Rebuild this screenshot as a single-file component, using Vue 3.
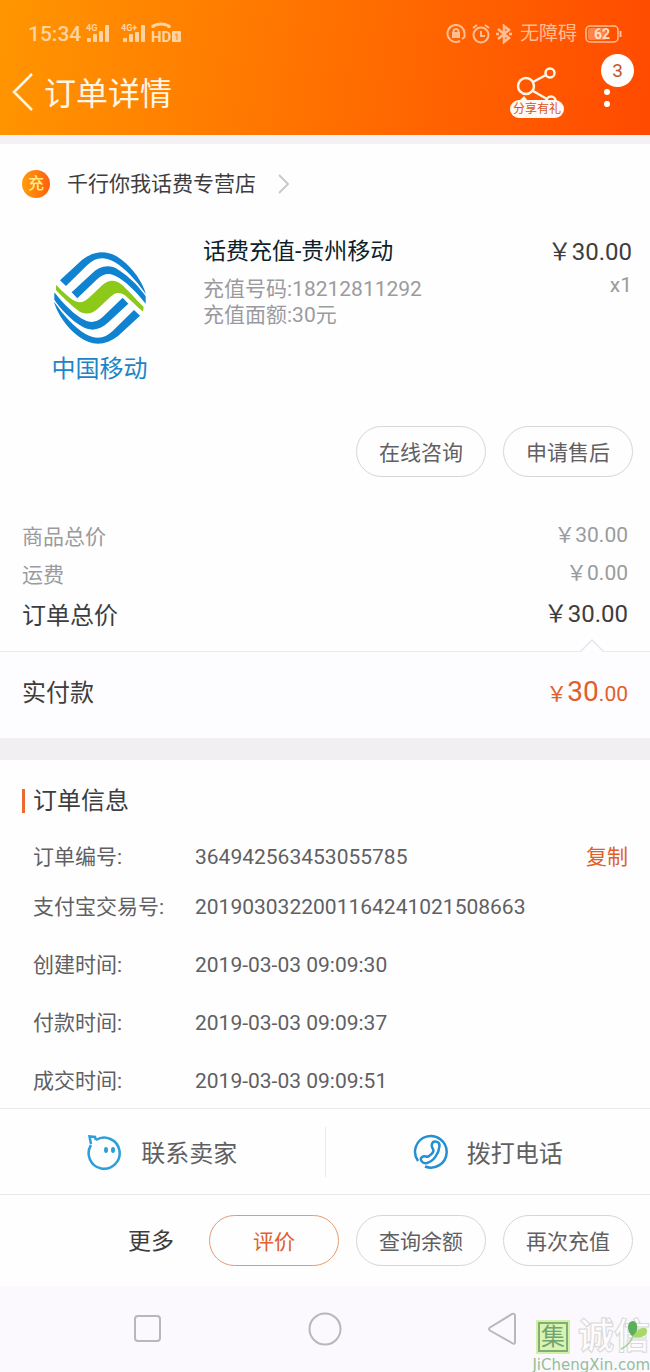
<template>
  <div class="page">
    <header class="header">
      <div class="status">
        <div class="status-left">
          <span class="clock">15:34</span>
          <svg class="signal" width="96" height="26" viewBox="0 -2 96 26">
            <text x="0" y="8" class="net">4G</text>
            <text x="35" y="8" class="net">4G+</text>
            <g fill="currentColor">
              <rect x="1" y="15" width="4" height="4" rx="1" />
              <rect x="7" y="11" width="4" height="8" rx="1" />
              <rect x="13" y="8" width="4" height="11" rx="1" />
              <rect x="19" y="2" width="4" height="17" rx="1" />
              <rect x="37" y="15" width="4" height="4" rx="1" />
              <rect x="43" y="11" width="4" height="8" rx="1" />
              <rect x="49" y="9" width="4" height="10" rx="1" />
              <rect x="55" y="2" width="4" height="17" rx="1" />
              <rect x="86" y="8" width="9" height="11" rx="1" />
            </g>
            <path d="M67 5 V3 Q75 -1 83 3 V5" fill="none" stroke="currentColor" stroke-width="3" />
            <text x="65" y="19" class="hd">HD</text>
            <path d="M89 12 l2 -1 v6" fill="none" stroke="#ff8300" stroke-width="1" />
          </svg>
        </div>
        <div class="status-right">
          <svg width="20" height="20" viewBox="0 0 20 20" fill="none" stroke="currentColor" stroke-width="2">
            <path d="M14 17 A8.5 8.5 0 1 1 18.5 10 M18.5 8 V13 L16 15" />
            <rect x="7" y="9" width="6" height="4" fill="currentColor" />
            <path d="M7.5 9 V7.5 a2.5 2.5 0 0 1 5 0 V9" />
          </svg>
          <svg width="20" height="20" viewBox="0 0 20 20" fill="none" stroke="currentColor" stroke-width="2">
            <circle cx="10" cy="11" r="7.5" />
            <path d="M10 7 V12 H14 M2 4 L6 1 M18 4 L14 1" />
          </svg>
          <svg width="16" height="20" viewBox="0 0 16 20" fill="none" stroke="currentColor" stroke-width="2.5">
            <path d="M2 5 L13 14 L8 18 V2 L13 6 L2 15" />
            <path d="M0 10 h3 M13 10 h3" />
          </svg>
          <span class="mode">无障碍</span>
          <svg width="37" height="18" viewBox="0 0 37 18">
            <rect x="1" y="1" width="32" height="16" rx="4" fill="none" stroke="currentColor" stroke-width="1.5" />
            <rect x="3" y="3" width="18" height="12" rx="2" fill="currentColor" opacity="0.45" />
            <path d="M35.5 6 V12" stroke="currentColor" stroke-width="2" />
            <text x="17" y="14" text-anchor="middle" class="battery">62</text>
          </svg>
        </div>
      </div>
      <div class="title-bar">
        <button class="back" aria-label="返回">
          <svg width="22" height="40" viewBox="0 0 22 40" fill="none" stroke="currentColor" stroke-width="2.5">
            <path d="M20 2 L2 20 L20 38" />
          </svg>
        </button>
        <h1>订单详情</h1>
        <button class="share" aria-label="分享有礼">
          <svg width="42" height="38" viewBox="0 0 42 38" fill="none" stroke="currentColor" stroke-width="2.5">
            <circle cx="10" cy="19" r="8" />
            <circle cx="34" cy="6" r="4.5" />
            <circle cx="35" cy="34" r="4.5" />
            <path d="M17 15 L30 8 M17 24 L31 32" />
            <path d="M3 34 L8 29 L12 34 Z" fill="currentColor" stroke="none" />
          </svg>
          <span class="share-tag">分享有礼</span>
        </button>
        <button class="menu" aria-label="菜单">
          <i></i><i></i>
          <span class="count">3</span>
        </button>
      </div>
    </header>

    <main>
      <section class="order">
        <a class="shop" href="#">
          <span class="shop-icon">充</span>
          <span>千行你我话费专营店</span>
          <svg width="12" height="20" viewBox="0 0 12 20" fill="none" stroke="#c9c9cc" stroke-width="2">
            <path d="M1 1 L10 10 L1 19" />
          </svg>
        </a>

        <div class="item">
          <div class="brand">
            <svg width="94" height="92" viewBox="39 35 282 276">
              <path class="green" d="M48 133 C70 156 90 174 105 182 C122 190 134 184 147 172 L185 136 C205 118 225 117 244 132 C265 150 290 180 311 200 L309 214 C290 198 270 178 255 165 C238 154 226 157 213 168 L175 204 C155 224 132 224 113 210 C90 192 65 167 48 150 Z" />
              <path class="blue" :d="outerBand" />
              <path class="blue" :d="innerBand" />
              <g transform="rotate(180 180 173)">
                <path class="blue" :d="outerBand" />
                <path class="blue" :d="innerBand" />
              </g>
            </svg>
            <span>中国移动</span>
          </div>
          <div class="item-info">
            <h2>话费充值-贵州移动</h2>
            <p>充值号码:18212811292</p>
            <p>充值面额:30元</p>
          </div>
          <div class="item-price">
            <strong>&#xFFE5;30.00</strong>
            <span>x1</span>
          </div>
        </div>

        <div class="buttons">
          <button class="pill">在线咨询</button>
          <button class="pill">申请售后</button>
        </div>

        <dl class="sums">
          <div v-for="sum in sums" :key="sum.label" :class="{ total: sum.total }">
            <dt>{{ sum.label }}</dt>
            <dd>{{ sum.value }}</dd>
          </div>
        </dl>
      </section>

      <section class="paid">
        <svg class="notch" width="24" height="13" viewBox="0 0 24 13">
          <path d="M0 13 L12 1 L24 13" fill="#fdfcfe" stroke="#e6e4e9" stroke-width="1.5" />
        </svg>
        <span>实付款</span>
        <span class="paid-price">&#xFFE5;<b>30</b>.00</span>
      </section>

      <section class="info">
        <h3>订单信息</h3>
        <dl>
          <div v-for="row in rows" :key="row.label" :class="{ time: row.time }">
            <dt>{{ row.label }}</dt>
            <dd>{{ row.value }}</dd>
            <button v-if="row.copy" class="copy" @click="copy(row.value)">复制</button>
          </div>
        </dl>
      </section>
    </main>

    <footer>
      <div class="contact">
        <button>
          <svg width="36" height="36" viewBox="0 0 36 36" fill="none" stroke="#2a9fd8" stroke-width="2.5">
            <path d="M9 6 A15.5 15.5 0 1 1 4 11" />
            <path d="M4 10 L2.5 2.5 L8 3 L9 6" />
            <g fill="#2a9fd8" stroke="none">
              <ellipse cx="19" cy="16" rx="2" ry="3" />
              <ellipse cx="26" cy="16" rx="2" ry="3" />
            </g>
          </svg>
          <span>联系卖家</span>
        </button>
        <button>
          <svg width="36" height="36" viewBox="0 0 36 36" fill="none" stroke="#2490cf" stroke-width="2.5">
            <path d="M5 27 A15.8 15.8 0 1 1 12 32.5" />
            <path d="M19 10 C20 6 27 7 26.5 12 C26 19 21 27 14 29 C9 30 6 25 9 23 C12 21 14 24 16 22 C19 20 21 17 20 15 C19 13 18 13 19 10 Z" />
          </svg>
          <span>拨打电话</span>
        </button>
      </div>
      <div class="actions">
        <button class="more">更多</button>
        <button class="pill primary">评价</button>
        <button class="pill">查询余额</button>
        <button class="pill">再次充值</button>
      </div>
      <nav>
        <button aria-label="最近">
          <svg width="28" height="28" viewBox="0 0 28 28"><rect x="1" y="1" width="25" height="25" rx="3" /></svg>
        </button>
        <button aria-label="主页">
          <svg width="34" height="34" viewBox="0 0 34 34"><circle cx="17" cy="17" r="15.5" /></svg>
        </button>
        <button aria-label="后退">
          <svg width="30" height="34" viewBox="0 0 30 34">
            <path d="M25 2 Q28 1 28 4 V30 Q28 33 25 31 L3 18.5 Q1 17 3 15.5 Z" />
          </svg>
        </button>
      </nav>
    </footer>

    <div class="watermark">
      <div class="mark-row">
        <span class="mark-box">集</span>
        <span class="mark-name">诚信</span>
        <svg class="leaf" width="28" height="32" viewBox="0 0 28 32">
          <path d="M12 17 C6 11 7 2 13 2 C18 3 18 8 16 16 Z" fill="#5fae5c" />
          <path d="M13 18 C16 10 25 6 27 11 C28 17 20 20 13 18 Z" fill="#a9d86a" />
          <path d="M13 17 Q10 26 1 30" fill="none" stroke="#a9cf9c" stroke-width="1.5" />
        </svg>
      </div>
      <span class="mark-url">JiChengXin.com</span>
    </div>
  </div>
</template>

<script setup>
// 中国移动标志的两条蓝带，旋转180度后得到下半部分
const outerBand = 'M60 120 L125 60 C165 28 205 28 245 58 C280 85 308 125 318 162 C285 115 255 85 225 66 C190 46 165 52 142 74 L78 137 Z'
const innerBand = 'M95 156 L155 100 C182 75 208 72 235 88 C270 110 300 142 317 168 L317 190 C290 155 255 120 225 106 C205 97 190 101 172 116 L112 174 Z'

// 全角人民币符号
const yuan = '\uffe5'

const sums = [
  { label: '商品总价', value: yuan + '30.00' },
  { label: '运费', value: yuan + '0.00' },
  { label: '订单总价', value: yuan + '30.00', total: true }
]

const rows = [
  { label: '订单编号:', value: '364942563453055785', copy: true },
  { label: '支付宝交易号:', value: '2019030322001164241021508663' },
  { label: '创建时间:', value: '2019-03-03 09:09:30', time: true },
  { label: '付款时间:', value: '2019-03-03 09:09:37', time: true },
  { label: '成交时间:', value: '2019-03-03 09:09:51', time: true }
]

const copy = (text) => {
  navigator.clipboard?.writeText(text)
}
</script>

<style>
body {
  background: #fdfcfe;
}
</style>

<style scoped>
.page {
  position: relative;
  font-family: Roboto, "Noto Sans CJK SC", sans-serif;
  font-size: 21px;
  line-height: 26px;
  color: #3d3d40;
  background: #fefefe;
}

h1, h2, h3, p, dl, dd {
  margin: 0;
  font-weight: 400;
}

button {
  padding: 0;
  border: 0;
  background: none;
  font: inherit;
  color: inherit;
  cursor: pointer;
}

svg {
  display: block;
  flex: none;
}

/* 顶部 */
.header {
  padding-top: 20px;
  height: 115px;
  color: #fff6e6;
  background: linear-gradient(100deg, #ff9600 0%, #ff7200 48%, #ff4a00 100%);
  border-bottom: 9px solid #f3f1f3;
  background-clip: padding-box;
}

.status {
  display: flex;
  justify-content: space-between;
  align-items: center;
  height: 28px;
  padding: 0 28px;
  color: #ffd3a0;
}

.status-left,
.status-right {
  display: flex;
  align-items: center;
  gap: 5px;
}

.status-right {
  color: #ffbe94;
}

.clock {
  font-size: 21px;
  font-weight: 500;
}

.net {
  font-size: 9px;
  font-weight: 700;
  fill: currentColor;
}

.hd {
  font-size: 15px;
  font-weight: 700;
  fill: currentColor;
}

.mode {
  margin: 0 3px;
  font-size: 19px;
}

.battery {
  font-size: 14px;
  font-weight: 700;
  fill: #ffe0cc;
}

.title-bar {
  display: flex;
  align-items: center;
  height: 88px;
  padding: 0 17px 0 12px;
}

.back {
  margin-right: 10px;
}

h1 {
  flex: 1;
  padding-top: 4px;
  font-size: 32px;
  line-height: 40px;
}

.share {
  display: flex;
  flex-direction: column;
  align-items: center;
  margin-right: 37px;
}

.share-tag {
  margin-top: -5px;
  padding: 0 3px;
  border-radius: 9px;
  font-size: 12px;
  line-height: 18px;
  color: #d9531e;
  background: #fffaf5;
}

.menu {
  position: relative;
  display: flex;
  flex-direction: column;
  align-items: flex-start;
  gap: 6px;
  width: 32px;
  padding-top: 12px;
}

.menu i {
  width: 6px;
  height: 6px;
  margin-left: 3px;
  border-radius: 50%;
  background: #fff;
}

.count {
  position: absolute;
  right: -1px;
  bottom: 20px;
  width: 33px;
  height: 33px;
  border-radius: 50%;
  font-size: 19px;
  line-height: 33px;
  color: #c4562c;
  background: #fff;
}

/* 商品 */
.shop {
  display: flex;
  align-items: center;
  height: 80px;
  padding: 0 22px;
  color: #3d3d40;
  text-decoration: none;
}

.shop-icon {
  width: 28px;
  height: 28px;
  margin-right: 17px;
  border-radius: 50%;
  font-size: 16px;
  font-weight: 500;
  line-height: 28px;
  text-align: center;
  color: #ffeb8a;
  background: linear-gradient(90deg, #ff9d0a, #ff6010);
}

.shop svg {
  margin-left: 22px;
}

.item {
  display: flex;
  padding: 13px 18px 0 22px;
}

.brand {
  display: flex;
  flex-direction: column;
  align-items: center;
  gap: 12px;
  width: 155px;
  padding-top: 15px;
  font-size: 24px;
  color: #1d85c7;
}

.blue {
  fill: #0f82d0;
}

.green {
  fill: #8cc919;
}

.item-info {
  flex: 1;
  padding-left: 26px;
  color: #9b9b9f;
}

h2 {
  margin-bottom: 9px;
  font-size: 23px;
  line-height: 30px;
  color: #0d1f2b;
}

.item-price {
  display: flex;
  flex-direction: column;
  align-items: flex-end;
  gap: 5px;
  color: #9b9b9f;
}

.item-price strong {
  font-size: 24px;
  font-weight: 400;
  line-height: 30px;
  color: #3d3d40;
}

.buttons {
  display: flex;
  justify-content: flex-end;
  gap: 17px;
  padding: 44px 17px 0;
}

.pill {
  width: 130px;
  height: 51px;
  padding-top: 2px;
  border: 1px solid #d6d5d8;
  border-radius: 26px;
  color: #606063;
}

.primary {
  border-color: #e39a70;
  color: #e0602a;
}

.sums {
  padding: 41px 22px 14px;
  color: #9b9b9f;
}

.sums div {
  display: flex;
  justify-content: space-between;
  align-items: center;
  height: 38px;
}

.sums dd {
  padding-bottom: 4px;
}

.sums .total {
  height: 43px;
  font-size: 24px;
  color: #3d3d40;
}

/* 实付款 */
.paid {
  position: relative;
  display: flex;
  justify-content: space-between;
  align-items: center;
  height: 82px;
  padding: 0 22px 4px;
  border-top: 1px solid #ebe9ed;
  border-bottom: 22px solid #f1eff2;
  font-size: 24px;
  background: #fdfcfe;
}

.notch {
  position: absolute;
  top: -13px;
  right: 46px;
}

.paid-price {
  font-size: 21px;
  color: #e0602a;
}

.paid-price b {
  font-size: 28px;
  font-weight: 400;
}

/* 订单信息 */
.info {
  padding: 28px 22px 2px;
  color: #606063;
}

h3 {
  display: flex;
  align-items: center;
  gap: 8px;
  margin-bottom: 18px;
  font-size: 24px;
  color: #3d3d40;
}

h3::before {
  content: "";
  width: 3px;
  height: 24px;
  background: #ea6a30;
}

.info dl div {
  display: flex;
  align-items: center;
  height: 50px;
  padding-left: 11px;
}

.info dl .time {
  margin-top: 8px;
}

.info dt {
  width: 162px;
}

.info dd {
  flex: 1;
}

.copy {
  color: #e0602a;
}

/* 底部 */
.contact {
  display: flex;
  align-items: center;
  height: 85px;
  border-top: 1px solid #ebe9ed;
  border-bottom: 1px solid #ebe9ed;
  font-size: 24px;
  color: #606063;
}

.contact button {
  display: flex;
  flex: 1;
  justify-content: center;
  align-items: center;
  gap: 18px;
  height: 50px;
}

.contact span {
  padding-top: 4px;
}

.contact button + button {
  border-left: 1px solid #ebe9ed;
}

.actions {
  display: flex;
  justify-content: flex-end;
  align-items: center;
  gap: 17px;
  height: 91px;
  padding: 0 17px;
}

.more {
  margin-right: 18px;
  padding-top: 2px;
  font-size: 23px;
}

nav {
  display: grid;
  grid-template-columns: repeat(3, 1fr);
  height: 86px;
  padding: 0 60px;
  background: #fbf9fd;
}

nav button {
  display: flex;
  justify-content: center;
  align-items: center;
}

nav svg {
  fill: none;
  stroke: #b9b7bb;
  stroke-width: 2;
}

/* 水印 */
.watermark {
  position: absolute;
  right: 0;
  bottom: 0;
  display: flex;
  flex-direction: column;
  align-items: flex-end;
}

.mark-row {
  position: relative;
  display: flex;
  align-items: center;
  gap: 10px;
}

.mark-box {
  width: 26px;
  border: 2px solid #7fae78;
  outline: 2px solid #d3f0a4;
  font-size: 24px;
  text-align: center;
  color: #6fa573;
  background: #d9f3b0;
}

.mark-name {
  font-size: 36px;
  font-weight: 700;
  line-height: 42px;
  color: #fdfcfe;
  -webkit-text-stroke: 1px #d8d8d8;
}

.leaf {
  position: absolute;
  right: 2px;
  top: 3px;
}

.mark-url {
  font-family: "DejaVu Sans", sans-serif;
  font-size: 15px;
  line-height: 14px;
  color: #93bf9b;
}
</style>
